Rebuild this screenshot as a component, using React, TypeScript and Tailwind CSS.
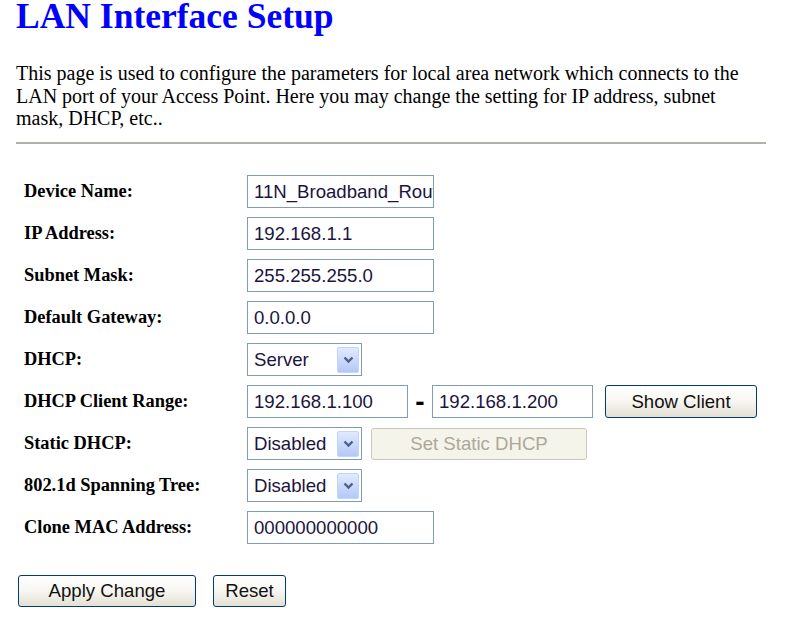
import React from "react";

const serif = { fontFamily: '"Liberation Serif", "Times New Roman", serif' };

function TextBox({ value, w }: { value: string; w: string }) {
  return (
    <div
      className={`${w} h-[33px] border border-[#7f9db9] bg-white flex items-center pl-[6px] overflow-hidden whitespace-nowrap text-[18.6px] text-[#1b1440] font-['Liberation_Sans',Arial,sans-serif]`}
    >
      {value}
    </div>
  );
}

function Select({ value }: { value: string }) {
  return (
    <div className="w-[115px] h-[33px] border border-[#7f9db9] bg-white flex items-center justify-between pl-[6px] pr-[2px] text-[18.6px] text-[#1b1440] font-['Liberation_Sans',Arial,sans-serif]">
      <span>{value}</span>
      <div className="w-[22px] h-[26px] rounded-[2px] border border-[#c3d3fd] bg-gradient-to-b from-[#e1eafe] to-[#b4c8f7] flex items-center justify-center">
        <svg width="11" height="8" viewBox="0 0 11 8">
          <path d="M1.5 1.5 L5.5 5.5 L9.5 1.5" fill="none" stroke="#4d6185" strokeWidth="2.4" />
        </svg>
      </div>
    </div>
  );
}

function Button({ label, w, h = "h-[32px]", disabled = false }: { label: string; w: string; h?: string; disabled?: boolean }) {
  return (
    <div
      className={
        disabled
          ? `${w} ${h} rounded-[3px] border border-[#cac8bb] bg-[#f5f4ea] flex items-center justify-center text-[18.6px] text-[#aca899] font-['Liberation_Sans',Arial,sans-serif]`
          : `${w} ${h} rounded-[3px] border border-[#003c74] bg-gradient-to-b from-white via-[#f7f6f1] to-[#e3e0d3] flex items-center justify-center text-[18.6px] text-[#111] font-['Liberation_Sans',Arial,sans-serif]`
      }
    >
      {label}
    </div>
  );
}

function Row({ label, children }: { label: string; children: React.ReactNode }) {
  return (
    <div className="h-[42px] flex items-center">
      <div className="w-[231px] pl-[8px] font-bold text-[18.4px] text-black" style={serif}>
        {label}
      </div>
      <div className="flex items-center">{children}</div>
    </div>
  );
}

export default function App() {
  return (
    <div className="w-[786px] h-[618px] bg-white overflow-hidden pl-[16px]" style={serif}>
      <h1 className="text-[35.5px] leading-[32px] font-bold text-[#0000ff] whitespace-nowrap" style={serif}>
        LAN Interface Setup
      </h1>
      <p className="mt-[30px] w-[750px] text-[20px] leading-[22.5px] text-black whitespace-nowrap" style={serif}>
        This page is used to configure the parameters for local area network which connects to the
        <br />
        LAN port of your Access Point. Here you may change the setting for IP address, subnet
        <br />
        mask, DHCP, etc..
      </p>
      <div className="mt-[12px] w-[750px] border-t-2 border-[#b3b0a4]" />
      <div className="mt-[27px] flex flex-col">
        <Row label="Device Name:">
          <TextBox value="11N_Broadband_Router" w="w-[187px]" />
        </Row>
        <Row label="IP Address:">
          <TextBox value="192.168.1.1" w="w-[187px]" />
        </Row>
        <Row label="Subnet Mask:">
          <TextBox value="255.255.255.0" w="w-[187px]" />
        </Row>
        <Row label="Default Gateway:">
          <TextBox value="0.0.0.0" w="w-[187px]" />
        </Row>
        <Row label="DHCP:">
          <Select value="Server" />
        </Row>
        <Row label="DHCP Client Range:">
          <TextBox value="192.168.1.100" w="w-[161px]" />
          <span className="w-[24px] text-center font-bold text-[28px] leading-[28px] text-black font-['Liberation_Sans',Arial,sans-serif]">-</span>
          <TextBox value="192.168.1.200" w="w-[161px]" />
          <div className="ml-[12px]">
            <Button label="Show Client" w="w-[152px]" h="h-[33px]" />
          </div>
        </Row>
        <Row label="Static DHCP:">
          <Select value="Disabled" />
          <div className="ml-[9px]">
            <Button label="Set Static DHCP" w="w-[216px]" disabled />
          </div>
        </Row>
        <Row label="802.1d Spanning Tree:">
          <Select value="Disabled" />
        </Row>
        <Row label="Clone MAC Address:">
          <TextBox value="000000000000" w="w-[187px]" />
        </Row>
      </div>
      <div className="mt-[26px] flex items-center gap-[17px] pl-[2px]">
        <Button label="Apply Change" w="w-[178px]" />
        <Button label="Reset" w="w-[73px]" />
      </div>
    </div>
  );
}
